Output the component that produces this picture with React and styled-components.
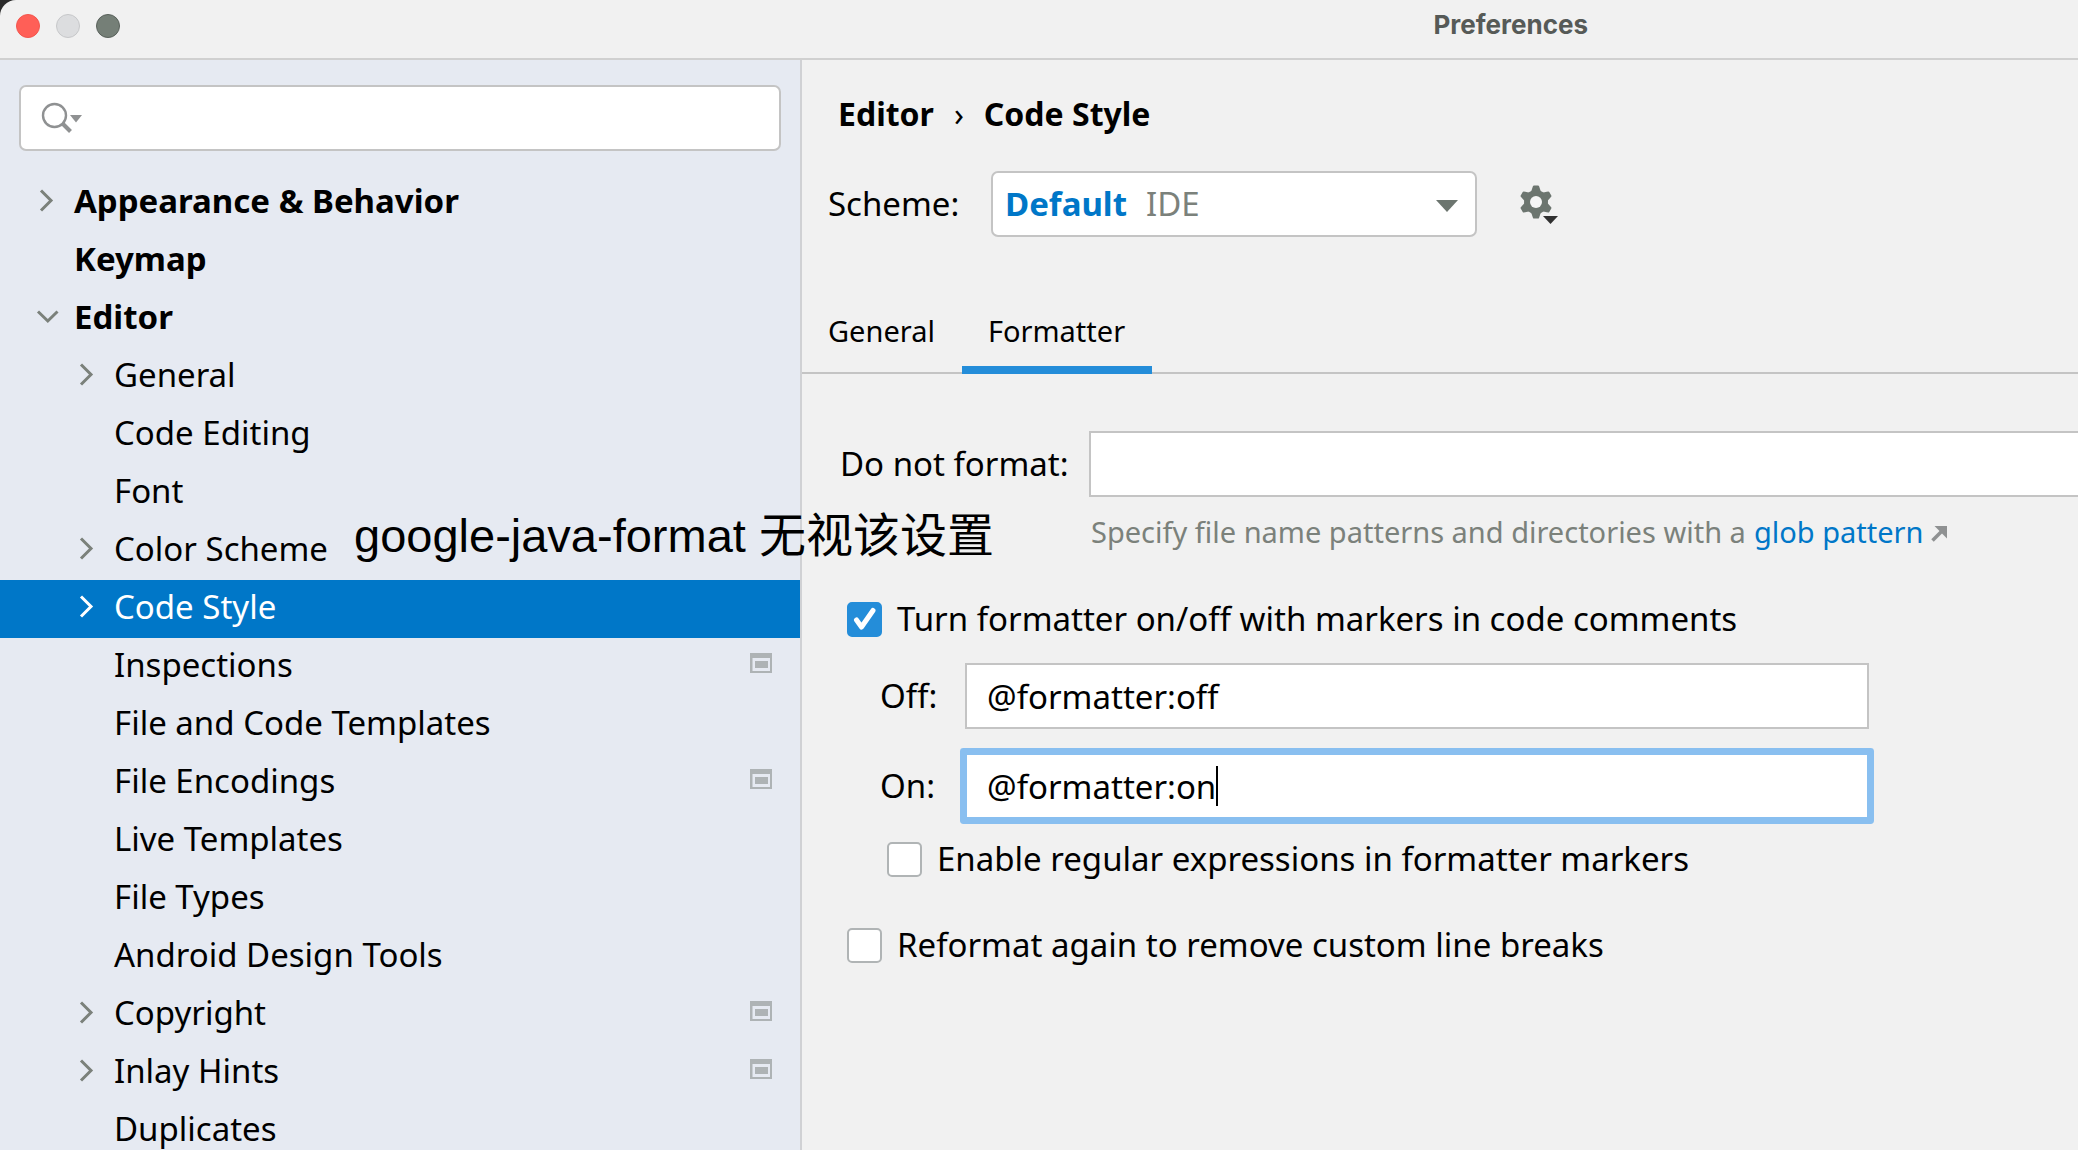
import React from 'react';
import styled, { createGlobalStyle } from 'styled-components';

const ui = "'Noto Sans', 'Open Sans', 'Noto Sans CJK SC', sans-serif";

const GlobalStyle = createGlobalStyle`
  *, *::before, *::after { box-sizing: border-box; }
  html, body, #root { height: 100%; }
  body {
    margin: 0;
    overflow: hidden;
    background: #2b2b2b;
    font-family: ${ui};
    font-size: 33px;
    line-height: 46px;
    color: #000;
  }
  button, input, select { font: inherit; color: inherit; margin: 0; }
`;

const Window = styled.div`
  position: relative;
  display: flex;
  flex-direction: column;
  height: 100%;
  overflow: hidden;
  background: #f1f1f1;
  border-top-left-radius: 16px;
`;

const TitleBar = styled.header`
  flex: none;
  display: flex;
  align-items: center;
  height: 60px;
  padding: 0 490px 6px 16px;
  border-bottom: 2px solid #d0d0d0;
`;

const Lights = styled.div`
  display: flex;
  gap: 16px;
`;

const Light = styled.button`
  width: 24px;
  height: 24px;
  padding: 0;
  border: 1px solid ${(p) => p.$edge};
  border-radius: 50%;
  background: ${(p) => p.$fill};
`;

const Title = styled.h1`
  margin: 0 0 0 auto;
  padding-bottom: 2px;
  font: 700 26px/32px Inter, sans-serif;
  color: #565a57;
`;

const Body = styled.div`
  flex: 1;
  display: flex;
  min-height: 0;
`;

const Sidebar = styled.nav`
  flex: none;
  width: 802px;
  overflow: hidden;
  border-right: 2px solid #d0d1d4;
  background: #e6eaf2;
`;

const SearchBox = styled.label`
  display: flex;
  align-items: center;
  height: 66px;
  margin: 25px 19px 23px;
  padding-left: 20px;
  border: 2px solid #c4c4c4;
  border-radius: 7px;
  background: #fff;
`;

const SearchInput = styled.input`
  flex: 1;
  min-width: 0;
  height: 100%;
  padding: 0 12px;
  border: 0;
  outline: 0;
  background: transparent;
`;

const Tree = styled.ul`
  margin: 0;
  padding: 0;
  list-style: none;
`;

const TreeRow = styled.li`
  display: flex;
  align-items: center;
  height: 58px;
  padding: 0 27px 4px ${(p) => (p.$level ? 74 : 34)}px;
  background: ${(p) => (p.$selected ? '#0077c8' : 'transparent')};
  color: ${(p) => (p.$selected ? '#fff' : '#000')};
  font-weight: ${(p) => (p.$level ? 400 : 700)};
  line-height: 40px;
`;

const ChevronSlot = styled.span`
  flex: none;
  display: flex;
  align-items: center;
  width: 40px;
  height: 28px;
  color: ${(p) => (p.$selected ? '#fff' : '#7b817b')};
`;

const RowName = styled.span`
  flex: 1;
  white-space: nowrap;
`;

const Pane = styled.main`
  flex: 1;
  min-width: 0;
  overflow: hidden;
`;

const Breadcrumb = styled.h2`
  display: flex;
  align-items: center;
  gap: 20px;
  margin: 30px 0 33px 36px;
  font-size: 32px;
  line-height: 48px;
  font-weight: 700;
  white-space: nowrap;
`;

const CrumbMark = styled.span`
  font-weight: 400;
`;

const SchemeRow = styled.div`
  display: flex;
  align-items: center;
  height: 66px;
  margin: 0 0 53px 26px;
`;

const SchemeLabel = styled.label`
  flex: none;
  width: 163px;
`;

const Combo = styled.div`
  position: relative;
  flex: 0 1 486px;
  height: 66px;
`;

const ComboSelect = styled.select`
  appearance: none;
  width: 100%;
  height: 100%;
  padding: 0 60px 0 12px;
  border: 2px solid #c4c4c4;
  border-radius: 7px;
  background: #fff;
  color: #0077c8;
  font-weight: 700;
`;

const ComboNote = styled.span`
  position: absolute;
  top: 10px;
  left: 155px;
  color: #7b817b;
  pointer-events: none;
`;

const ComboArrow = styled.svg`
  position: absolute;
  top: 29px;
  right: 19px;
  pointer-events: none;
`;

const IconButton = styled.button`
  display: flex;
  margin-left: 41px;
  padding: 0;
  border: 0;
  background: none;
`;

const Tabs = styled.div`
  display: flex;
  margin-bottom: 57px;
  box-shadow: inset 0 -2px #c4c4c4;
`;

const Tab = styled.button`
  height: 84px;
  padding: 6px 27px 0 26px;
  border: 0;
  border-bottom: 8px solid ${(p) => (p.$active ? '#248dd9' : 'transparent')};
  background: none;
  font-size: 29px;
  line-height: 46px;
`;

const Form = styled.div`
  padding-left: 38px;
`;

const Field = styled.div`
  display: flex;
  align-items: center;
  height: 66px;
  margin-left: ${(p) => p.$indent || 0}px;
  margin-bottom: ${(p) => p.$after}px;
`;

const FieldLabel = styled.label`
  flex: none;
  width: ${(p) => p.$width}px;
  white-space: nowrap;
`;

const InputBox = styled.div`
  flex: 0 1 ${(p) => (p.$bleed ? '100%' : '904px')};
  display: flex;
  align-items: center;
  min-width: 0;
  height: 66px;
  padding-left: 20px;
  border: 2px solid ${(p) => (p.$focused ? '#89bff0' : '#c4c4c4')};
  border-right-width: ${(p) => (p.$bleed ? 0 : 2)}px;
  border-radius: ${(p) => (p.$focused ? 1 : 0)}px;
  box-shadow: ${(p) => (p.$focused ? '0 0 0 5px #89bff0' : 'none')};
  background: #fff;
`;

const TextInput = styled.input`
  ${(p) => (p.$hug ? 'field-sizing: content;' : 'flex: 1;')}
  min-width: 0;
  height: 100%;
  padding: 0;
  border: 0;
  outline: 0;
  background: transparent;
`;

const Caret = styled.span`
  width: 2px;
  height: 40px;
  background: #000;
`;

const Hint = styled.p`
  display: flex;
  align-items: center;
  margin: 0 0 46px 251px;
  font-size: 29px;
  line-height: 36px;
  color: #7b817b;
  white-space: nowrap;
`;

const HintLink = styled.a`
  display: flex;
  align-items: center;
  gap: 8px;
  margin-left: 8px;
  color: #0077c8;
  text-decoration: none;
`;

const Check = styled.label`
  display: flex;
  align-items: center;
  gap: 15px;
  height: 46px;
  margin-left: ${(p) => (p.$nested ? 47 : 7)}px;
  margin-bottom: ${(p) => p.$after}px;
  white-space: nowrap;
`;

const CheckInput = styled.input`
  appearance: none;
  flex: none;
  width: 35px;
  height: 35px;
  border: 2px solid #b0b4b5;
  border-radius: 5px;
  background: #fff;
  &:checked {
    border-color: #248dd9;
    background: #248dd9;
  }
`;

const CheckFace = styled.span`
  display: grid;
  > * { grid-area: 1 / 1; }
  > svg { pointer-events: none; }
`;

const Annotation = styled.p`
  position: absolute;
  top: 509px;
  left: 354px;
  margin: 0;
  font-family: 'Liberation Sans', 'Noto Sans CJK SC', sans-serif;
  font-size: 47px;
  line-height: 54px;
  white-space: nowrap;
`;

const Chevron = ({ open }) =>
  open ? (
    <svg width="28" height="28" viewBox="0 0 28 28" fill="none" stroke="currentColor" strokeWidth="3">
      <path d="M4 8.500 13.800 18 23.500 8.500" />
    </svg>
  ) : (
    <svg width="28" height="28" viewBox="0 0 28 28" fill="none" stroke="currentColor" strokeWidth="3">
      <path d="M7 3.500 17 13.500 7 23.500" />
    </svg>
  );

const ProjectIcon = () => (
  <svg width="23" height="24" viewBox="0 0 23 24" aria-label="Project-level setting">
    <path fill="#aeb3b5" fillRule="evenodd" d="M0 0H22V20H0ZM2.500 5V18H20V5Z" />
    <rect x="5" y="8" width="13" height="7" fill="#aeb3b5" />
  </svg>
);

const SearchIcon = () => (
  <svg width="42" height="32" viewBox="0 0 42 32" fill="none" aria-label="Search">
    <circle cx="13.500" cy="13.500" r="11.500" stroke="#8f9192" strokeWidth="2.400" />
    <path d="M21.500 21.500 29.500 29.500" stroke="#8f9192" strokeWidth="4" />
    <path d="M29 13H41L35 20.500Z" fill="#8f9192" />
  </svg>
);

const Gear = () => (
  <svg width="42" height="40" viewBox="0 0 42 40" aria-hidden="true">
    <g fill="#6c756f">
      <circle cx="18" cy="18" r="12" />
      {[0, 60, 120, 180, 240, 300].map((a) => (
        <path key={a} d="M13 8 14.500 3.500 15 2Q15.300 1.500 16 1.500H20Q20.700 1.500 21 2L21.500 3.500 23 8Z" transform={`rotate(${a} 18 18)`} />
      ))}
    </g>
    <circle cx="18" cy="18" r="6" fill="#f6f6f6" />
    <path d="M25 32H40L32.500 40Z" fill="#303030" />
  </svg>
);

const rows = [
  { name: 'Appearance & Behavior', level: 0, chevron: 'closed' },
  { name: 'Keymap', level: 0 },
  { name: 'Editor', level: 0, chevron: 'open' },
  { name: 'General', level: 1, chevron: 'closed' },
  { name: 'Code Editing', level: 1 },
  { name: 'Font', level: 1 },
  { name: 'Color Scheme', level: 1, chevron: 'closed' },
  { name: 'Code Style', level: 1, chevron: 'closed', selected: true },
  { name: 'Inspections', level: 1, project: true },
  { name: 'File and Code Templates', level: 1 },
  { name: 'File Encodings', level: 1, project: true },
  { name: 'Live Templates', level: 1 },
  { name: 'File Types', level: 1 },
  { name: 'Android Design Tools', level: 1 },
  { name: 'Copyright', level: 1, chevron: 'closed', project: true },
  { name: 'Inlay Hints', level: 1, chevron: 'closed', project: true },
  { name: 'Duplicates', level: 1 },
];

function CheckRow({ label, checked, nested, after }) {
  return (
    <Check $nested={nested} $after={after}>
      <CheckFace>
        <CheckInput type="checkbox" defaultChecked={checked} />
        {checked && (
          <svg width="35" height="35" viewBox="0 0 35 35" fill="none" stroke="#fff" strokeWidth="5" strokeLinecap="round" strokeLinejoin="round">
            <path d="M9.500 18 14.500 25 26 8.500" />
          </svg>
        )}
      </CheckFace>
      {label}
    </Check>
  );
}

export default function App() {
  return (
    <>
      <GlobalStyle />
      <Window>
        <TitleBar>
          <Lights>
            <Light aria-label="Close" $fill="#ff5f57" $edge="#f2564e" />
            <Light aria-label="Minimize" $fill="#dcdddf" $edge="#c6c7c9" />
            <Light aria-label="Zoom" $fill="#757f77" $edge="#59615b" />
          </Lights>
          <Title>Preferences</Title>
        </TitleBar>
        <Body>
          <Sidebar>
            <SearchBox>
              <SearchIcon />
              <SearchInput type="text" aria-label="Search settings" />
            </SearchBox>
            <Tree>
              {rows.map((r) => (
                <TreeRow key={r.name} $level={r.level} $selected={r.selected}>
                  <ChevronSlot $selected={r.selected}>
                    {r.chevron && <Chevron open={r.chevron === 'open'} />}
                  </ChevronSlot>
                  <RowName>{r.name}</RowName>
                  {r.project && <ProjectIcon />}
                </TreeRow>
              ))}
            </Tree>
          </Sidebar>
          <Pane>
            <Breadcrumb>
              <span>Editor</span>
              <CrumbMark>›</CrumbMark>
              <span>Code Style</span>
            </Breadcrumb>
            <SchemeRow>
              <SchemeLabel htmlFor="scheme">Scheme:</SchemeLabel>
              <Combo>
                <ComboSelect id="scheme" defaultValue="Default">
                  <option>Default</option>
                </ComboSelect>
                <ComboNote>IDE</ComboNote>
                <ComboArrow width="22" height="12" viewBox="0 0 22 12">
                  <path d="M0 0H22L11 12Z" fill="#6c756f" />
                </ComboArrow>
              </Combo>
              <IconButton aria-label="Scheme actions">
                <Gear />
              </IconButton>
            </SchemeRow>
            <Tabs role="tablist">
              <Tab role="tab" aria-selected="false">General</Tab>
              <Tab role="tab" aria-selected="true" $active>Formatter</Tab>
            </Tabs>
            <Form>
              <Field $after={17}>
                <FieldLabel htmlFor="skip" $width={249}>Do not format:</FieldLabel>
                <InputBox $bleed>
                  <TextInput id="skip" type="text" />
                </InputBox>
              </Field>
              <Hint>
                Specify file name patterns and directories with a
                <HintLink href="#glob">
                  glob pattern
                  <svg width="16" height="20" viewBox="0 -4 16 20" fill="none" aria-hidden="true">
                    <path d="M1.500 14.500 12 4" stroke="#8f9192" strokeWidth="3.500" />
                    <path d="M3.500 0H16V12.500Z" fill="#8f9192" />
                  </svg>
                </HintLink>
              </Hint>
              <CheckRow label="Turn formatter on/off with markers in code comments" checked after={21} />
              <Field $indent={40} $after={24}>
                <FieldLabel htmlFor="off" $width={85}>Off:</FieldLabel>
                <InputBox>
                  <TextInput id="off" type="text" defaultValue="@formatter:off" />
                </InputBox>
              </Field>
              <Field $indent={40} $after={17}>
                <FieldLabel htmlFor="on" $width={85}>On:</FieldLabel>
                <InputBox $focused>
                  <TextInput id="on" type="text" defaultValue="@formatter:on" $hug />
                  <Caret />
                </InputBox>
              </Field>
              <CheckRow label="Enable regular expressions in formatter markers" nested after={40} />
              <CheckRow label="Reformat again to remove custom line breaks" after={0} />
            </Form>
          </Pane>
        </Body>
        <Annotation>google-java-format 无视该设置</Annotation>
      </Window>
    </>
  );
}
